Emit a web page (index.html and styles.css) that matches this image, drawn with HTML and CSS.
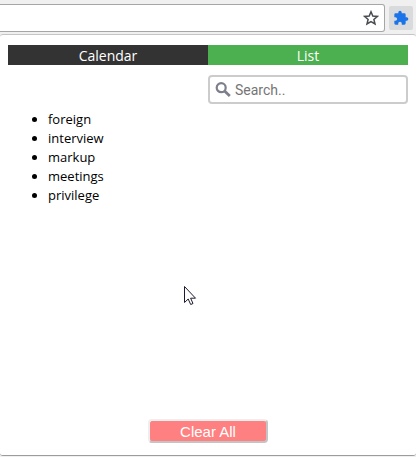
FILE: index.html
```
<!DOCTYPE html>
<html lang="en">
<head>
<meta charset="utf-8">
<title>Word list</title>
<link rel="stylesheet" href="styles.css">
</head>
<body>
<header class="toolbar">
  <div class="omnibox">
    <button class="star" type="button" aria-label="Bookmark">
      <svg width="16" height="16" viewBox="0 0 16 16"><path d="M8 1.800 9.800 6l4.600.4-3.500 3 1.100 4.500L8 11.500l-4 2.400 1.100-4.500-3.500-3L6.200 6Z" fill="none" stroke="#484c50" stroke-width="1.500"/></svg>
    </button>
  </div>
  <button class="extension" type="button" aria-label="Extensions">
    <svg width="16" height="16" viewBox="0 0 24 24"><path d="M20.500 11H19V7a2 2 0 0 0-2-2h-4V3.500a2.500 2.500 0 0 0-5 0V5H4a2 2 0 0 0-2 2v3.800h1.500a2.700 2.700 0 0 1 0 5.400H2V20a2 2 0 0 0 2 2h3.800v-1.500a2.700 2.700 0 0 1 5.400 0V22H17a2 2 0 0 0 2-2v-4h1.500a2.500 2.500 0 0 0 0-5Z" fill="#1a73e8"/></svg>
  </button>
</header>
<main class="popup">
  <nav class="tabs">
    <button class="tab" type="button">Calendar</button>
    <button class="tab tab-active" type="button">List</button>
  </nav>
  <label class="search">
    <svg width="16" height="16" viewBox="0 0 16 16"><circle cx="6.200" cy="5.700" r="4.500" fill="none" stroke="#7d7f8a" stroke-width="2.200"/><path d="m9.800 9.300 5 4.700" stroke="#7d7f8a" stroke-width="2.800"/></svg>
    <input class="search-input" type="text" placeholder="Search.." aria-label="Search">
  </label>
  <ul class="words">
    <li>foreign</li>
    <li>interview</li>
    <li>markup</li>
    <li>meetings</li>
    <li>privilege</li>
  </ul>
  <button class="clear" type="button">Clear All</button>
</main>
<svg class="cursor" width="14" height="21" viewBox="0 0 14 21"><path d="M1.500 1.500v16l3.700-3.500 2.500 5.500 2.300-1-2.400-5.300h4.900Z" fill="#fff" stroke="#1c1c30" stroke-width="1"/></svg>
</body>
</html>
```
FILE: styles.css
```
* {
  box-sizing: border-box;
}

body {
  margin: 0;
  min-height: 100vh;
  display: flex;
  flex-direction: column;
  background: #f0f0f0;
  font-family: "Segoe UI", "Open Sans", sans-serif;
  font-size: 13px;
  line-height: 19px;
  color: #000;
}

button {
  margin: 0;
  padding: 0;
  border: 0;
  font: inherit;
}

svg {
  display: block;
}

.toolbar {
  display: flex;
  align-items: center;
  gap: 4px;
  height: 34px;
  padding: 4px 3px 2px 0;
}

.omnibox {
  flex: 1;
  display: flex;
  align-items: center;
  justify-content: flex-end;
  height: 28px;
  padding-right: 5px;
  background: #fff;
  border: 1px solid #a6a6a6;
  border-left: 0;
  border-radius: 0 3px 3px 0;
}

.star {
  background: none;
}

.extension {
  display: grid;
  place-items: center;
  width: 24px;
  height: 24px;
  background: #d8dadc;
  border-radius: 2px;
}

.popup {
  flex: 1;
  display: flex;
  flex-direction: column;
  margin-bottom: 1px;
  padding: 10px 8px 12px;
  background: #fff;
  border-top: 1px solid #c4c4c4;
  border-bottom: 1px solid #9c9c9c;
  border-radius: 3px;
}

.tabs {
  display: grid;
  grid-template-columns: 1fr 1fr;
}

.tab {
  height: 20px;
  padding-top: 1px;
  background: #333;
  color: #fff;
  font-size: 14px;
  line-height: 19px;
}

.tab-active {
  background: #4caf50;
}

.search {
  align-self: flex-end;
  display: flex;
  align-items: center;
  gap: 4px;
  width: 50%;
  height: 29px;
  margin-top: 10px;
  padding: 0 5px;
  border: 2px solid #ccc;
  border-radius: 4px;
}

.search-input {
  flex: 1;
  min-width: 0;
  padding: 0;
  border: 0;
  outline: 0;
  background: none;
  font-family: Roboto, sans-serif;
  font-size: 14px;
}

.search-input::placeholder {
  color: #757575;
}

.words {
  margin: 6px 0 0;
  padding-left: 40px;
}

.clear {
  align-self: center;
  width: 120px;
  height: 24px;
  margin-top: auto;
  padding-top: 1px;
  background: #ff8080;
  border: 2px solid;
  border-color: #eee #c4c4c4 #c4c4c4 #eee;
  border-radius: 4px;
  color: #fff;
  font-family: "Liberation Sans", Arial, sans-serif;
  font-size: 15px;
  line-height: 19px;
}

.cursor {
  position: absolute;
  left: 183px;
  top: 285px;
}
```
